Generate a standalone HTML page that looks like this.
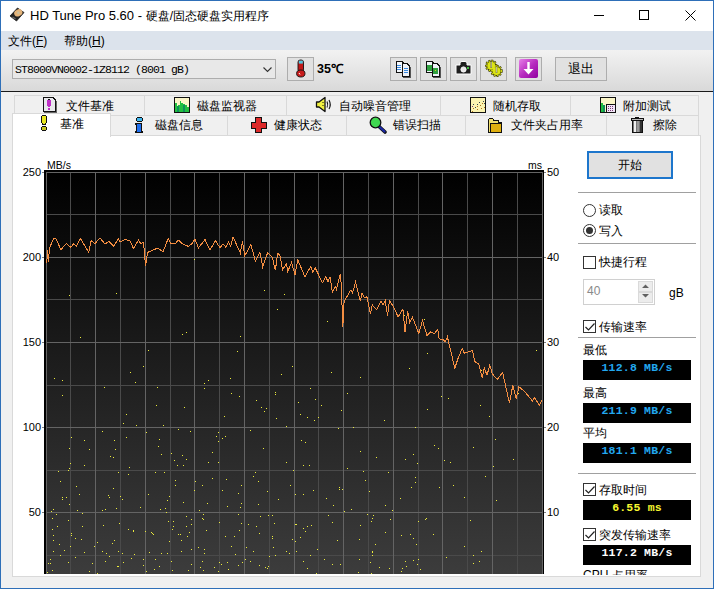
<!DOCTYPE html>
<html><head><meta charset="utf-8">
<style>
*{margin:0;padding:0;box-sizing:border-box}
html,body{width:714px;height:589px;overflow:hidden;background:#f0f0f0}
body{position:relative;font-family:"Liberation Sans",sans-serif;font-size:12px;color:#000}
.a{position:absolute}
.t{position:absolute;white-space:nowrap;line-height:1}
.win{left:0;top:0;width:714px;height:589px;border:1px solid #2e6fb8}
.title{left:1px;top:1px;width:712px;height:30px;background:#fff}
.menu{left:1px;top:31px;width:712px;height:19px;background:#dce3ec}
.tool{left:1px;top:50px;width:712px;height:41px;background:linear-gradient(#f2f2f2,#d9d9d9)}
.dark{left:1px;top:91px;width:712px;height:1px;background:#1a1a1a}
.tab{position:absolute;background:#f0f0f0;border:1px solid #d9d9d9;border-bottom:none}
.tbtn{position:absolute;top:57px;width:27px;height:24px;background:#e1e1e1;border:1px solid #adadad}
.panel{left:12px;top:135px;width:689px;height:442px;background:#fff;border:1px solid #d9d9d9}
.sep{position:absolute;left:578px;width:118px;height:1px;background:#a0a0a0}
.box{position:absolute;left:583px;width:108px;height:20px;background:#000;font-family:"Liberation Mono",monospace;font-weight:bold;font-size:11.5px;letter-spacing:0.2px;text-align:center;line-height:16px}
.cb{position:absolute;left:583px;width:13px;height:13px;border:1px solid #333;background:#fff}
</style></head><body>
<div class="a win"></div>
<div class="a title"></div>
<div class="a menu"></div>
<div class="a tool"></div>
<div class="a dark"></div>

<!-- title -->
<svg class="a" style="left:6px;top:4px" width="24" height="22" viewBox="0 0 24 22">
 <path d="M4 12 L11.5 4 L18 8.5 L10.5 17 Z" fill="#222" stroke="#1a1a1a" stroke-width="0.8" stroke-linejoin="round"/>
 <ellipse cx="12.3" cy="8.8" rx="4.3" ry="3.3" transform="rotate(-30 12.3 8.8)" fill="#e4b47a"/>
 <circle cx="12.3" cy="8.8" r="1.2" fill="#c8c0a0"/>
 <path d="M6.5 13 L9.5 15" stroke="#666" stroke-width="1.5"/>
</svg>
<div class="t" style="left:30px;top:9px;font-size:13px;color:#000">HD Tune Pro 5.60 - <span style="font-size:12px">硬盘/固态硬盘实用程序</span></div>
<div class="a" style="left:594px;top:15px;width:10px;height:1px;background:#000"></div>
<div class="a" style="left:639px;top:10px;width:10px;height:10px;border:1px solid #000"></div>
<svg class="a" style="left:685px;top:10px" width="11" height="11"><path d="M0.5 0.5 L10.5 10.5 M10.5 0.5 L0.5 10.5" stroke="#000" stroke-width="1"/></svg>

<!-- menu -->
<div class="t" style="left:8px;top:35px;font-size:12px">文件(<u>F</u>)</div>
<div class="t" style="left:64px;top:35px;font-size:12px">帮助(<u>H</u>)</div>

<!-- toolbar -->
<div class="a" style="left:12px;top:59px;width:264px;height:20px;background:#e8e8e8;border:1px solid #adadad"></div>
<div class="t" style="left:15px;top:64px;font-family:'Liberation Mono',monospace;font-size:11.5px;letter-spacing:-0.9px">ST8000VN0002-1Z8112 (8001 gB)</div>
<svg class="a" style="left:263px;top:67px" width="9" height="6"><path d="M0.5 0.5 L4.5 4.5 L8.5 0.5" stroke="#333" stroke-width="1.1" fill="none"/></svg>

<div class="tbtn" style="left:287px"></div>
<svg class="a" style="left:295px;top:59px" width="11" height="19" viewBox="0 0 11 19">
 <rect x="3" y="1" width="5.5" height="12" rx="2.2" fill="#c01818" stroke="#111" stroke-width="0.9"/>
 <rect x="3.8" y="1.6" width="4" height="3" fill="#50c8e0"/>
 <ellipse cx="5.8" cy="14.5" rx="4.2" ry="3.5" fill="#c81c1c" stroke="#111" stroke-width="0.9"/>
 <path d="M4 14 L5 15.5" stroke="#fff" stroke-width="1"/>
</svg>
<div class="t" style="left:317px;top:63px;font-weight:bold;font-size:12.5px">35℃</div>

<div class="tbtn" style="left:390px"></div>
<div class="tbtn" style="left:420px"></div>
<div class="tbtn" style="left:450px"></div>
<div class="tbtn" style="left:480px"></div>
<div class="tbtn" style="left:515px"></div>
<div class="a" style="left:555px;top:57px;width:52px;height:24px;background:#e1e1e1;border:1px solid #adadad"></div>
<div class="t" style="left:568px;top:62px;font-size:13px">退出</div>

<!-- tool icons -->
<svg class="a" style="left:394px;top:59px" width="20" height="20" viewBox="0 0 20 20" shape-rendering="crispEdges">
 <path d="M2 2 H8 L10 4 V14 H2 Z" fill="#111"/>
 <path d="M3 3 H7.5 L9 4.5 V13 H3 Z" fill="#f4f8fc"/>
 <path d="M3 6h4v1h-4zM3 8h4v1h-4zM3 10h4v1h-4z" fill="#3a8ae0"/>
 <path d="M8 4 H13 L16 7 V18 H8 Z" fill="#111"/>
 <path d="M9 5 H12.5 L15 7.5 V17 H9 Z" fill="#eef2f8"/>
 <path d="M10 9h4v1h-4zM10 11h4v1h-4zM10 13h4v1h-4z" fill="#3a8ae0"/>
 <path d="M16 8 H17 V19 H9 V18 H16 Z" fill="#555"/>
</svg>
<svg class="a" style="left:424px;top:59px" width="20" height="20" viewBox="0 0 20 20" shape-rendering="crispEdges">
 <path d="M2 2 H8 L10 4 V14 H2 Z" fill="#111"/>
 <path d="M3 3 H7.5 L9 4.5 V13 H3 Z" fill="#f4f8fc"/>
 <rect x="3" y="6" width="5" height="6" fill="#30a040"/>
 <path d="M8 4 H13 L16 7 V18 H8 Z" fill="#111"/>
 <path d="M9 5 H12.5 L15 7.5 V17 H9 Z" fill="#eef2f8"/>
 <rect x="9" y="9" width="5" height="6" fill="#30a040"/>
 <rect x="11" y="11" width="1" height="1" fill="#dd0"/>
 <path d="M16 8 H17 V19 H9 V18 H16 Z" fill="#555"/>
</svg>
<svg class="a" style="left:454px;top:60px" width="20" height="17" viewBox="0 0 20 17">
 <path d="M2 5 H6 V3 Q6 1.5 8 1.5 H11 Q13 1.5 13 3 V5 H17 V14 H2 Z" fill="#1e1e1e" stroke="#fff" stroke-width="1"/>
 <circle cx="9.5" cy="9.5" r="2.6" fill="#e8e8e8" stroke="#fafafa" stroke-width="1"/>
 <rect x="13" y="7" width="2" height="2" fill="#40c040"/>
</svg>
<svg class="a" style="left:484px;top:59px" width="20" height="19" viewBox="0 0 20 19">
 <circle cx="7.2" cy="6.8" r="5" fill="#3a3a00"/>
 <circle cx="12.5" cy="11.9" r="5" fill="#3a3a00"/>
 <circle cx="7.2" cy="6.8" r="5" fill="none" stroke="#3a3a00" stroke-width="2.4" stroke-dasharray="1.8 1.1"/>
 <circle cx="12.5" cy="11.9" r="5" fill="none" stroke="#3a3a00" stroke-width="2.4" stroke-dasharray="1.8 1.1"/>
 <circle cx="7.2" cy="6.8" r="4.9" fill="none" stroke="#d8e010" stroke-width="1.2" stroke-dasharray="1.2 1.7"/>
 <circle cx="7.2" cy="6.8" r="4" fill="#dce414"/>
 <circle cx="12.5" cy="11.9" r="4.9" fill="none" stroke="#d8e010" stroke-width="1.2" stroke-dasharray="1.2 1.7"/>
 <circle cx="12.5" cy="11.9" r="4" fill="#dce414"/>
 <path d="M7.2 2.5 V9 M12.5 7.5 V14" stroke="#707048" stroke-width="1.6"/>
 <path d="M7.2 3 V8.5 M12.5 8 V13.5" stroke="#f0f0c8" stroke-width="0.6"/>
</svg>
<svg class="a" style="left:519px;top:59px" width="19" height="19" viewBox="0 0 19 19">
 <defs><linearGradient id="pg" x1="0" y1="0" x2="1" y2="1"><stop offset="0" stop-color="#e880e8"/><stop offset="0.5" stop-color="#b82cc0"/><stop offset="1" stop-color="#9000a0"/></linearGradient></defs>
 <rect x="0" y="0" width="19" height="19" rx="2" fill="url(#pg)"/>
 <path d="M8.3 3 H10.7 V10 H14.5 L9.5 15.5 L4.5 10 H8.3 Z" fill="#fff"/>
</svg>

<!-- tabs top row -->
<div class="tab" style="left:14px;top:95px;width:131px;height:21px"></div>
<div class="tab" style="left:144px;top:95px;width:143px;height:21px"></div>
<div class="tab" style="left:286px;top:95px;width:155px;height:21px"></div>
<div class="tab" style="left:440px;top:95px;width:131px;height:21px"></div>
<div class="tab" style="left:570px;top:95px;width:129px;height:21px"></div>
<!-- tabs bottom row -->
<div class="tab" style="left:110px;top:115px;width:118px;height:21px"></div>
<div class="tab" style="left:227px;top:115px;width:120px;height:21px"></div>
<div class="tab" style="left:346px;top:115px;width:120px;height:21px"></div>
<div class="tab" style="left:465px;top:115px;width:142px;height:21px"></div>
<div class="tab" style="left:606px;top:115px;width:93px;height:21px"></div>

<div class="a panel"></div>
<div class="tab" style="left:12px;top:113px;width:99px;height:24px;background:#fff;border-color:#d9d9d9"></div>

<!-- tab labels -->
<div class="t" style="left:66px;top:100px">文件基准</div>
<div class="t" style="left:197px;top:100px">磁盘监视器</div>
<div class="t" style="left:339px;top:100px">自动噪音管理</div>
<div class="t" style="left:493px;top:100px">随机存取</div>
<div class="t" style="left:623px;top:100px">附加测试</div>
<div class="t" style="left:60px;top:118px">基准</div>
<div class="t" style="left:155px;top:119px">磁盘信息</div>
<div class="t" style="left:274px;top:119px">健康状态</div>
<div class="t" style="left:393px;top:119px">错误扫描</div>
<div class="t" style="left:511px;top:119px">文件夹占用率</div>
<div class="t" style="left:653px;top:119px">擦除</div>

<!-- tab icons -->
<svg class="a" style="left:42px;top:96px" width="17" height="18" viewBox="0 0 17 18" shape-rendering="crispEdges">
 <path d="M1 1 H11 L14 4 V16 H1 Z" fill="#111"/>
 <path d="M2 2 H10.5 L13 4.5 V15 H2 Z" fill="#e8e8ec"/>
 <path d="M5 4 H9 V10 H8 V11 H6 V10 H5 Z" fill="#c030c8"/>
 <path d="M6 3 H8 V4 H6 Z" fill="#111"/>
 <path d="M6 12 H8 V14 H6 Z" fill="#c030c8"/>
 <path d="M14 5 H15 V17 H2 V16 H14 Z" fill="#666"/>
</svg>
<svg class="a" style="left:173px;top:96px" width="18" height="18" viewBox="0 0 18 18" shape-rendering="crispEdges">
 <rect x="1" y="1" width="16" height="16" fill="#111"/>
 <rect x="2" y="2" width="14" height="14" fill="#fbf6c8"/>
 <path d="M2 7 H4 V10 H5 V9 H7 V5 H8 V7 H10 V8 H12 V9 H14 V11 H16 V16 H2 Z" fill="#22c040"/>
 <path d="M4 10 H6 V16 H4 Z M10 9 H12 V16 H10 Z" fill="#10905a"/>
</svg>
<svg class="a" style="left:315px;top:96px" width="18" height="17" viewBox="0 0 18 17">
 <path d="M1.5 6 H4 L10 1.5 V15.5 L4 11 H1.5 Z" fill="#f0f040" stroke="#111" stroke-width="1.3" stroke-linejoin="round"/>
 <path d="M8 6v1M8 9v1" stroke="#111"/>
 <path d="M12 5.5 Q13.5 8.5 12 11.5 M14 4 Q16.5 8.5 14 13" stroke="#111" stroke-width="1.1" fill="none"/>
</svg>
<svg class="a" style="left:469px;top:96px" width="18" height="18" viewBox="0 0 18 18" shape-rendering="crispEdges">
 <rect x="1" y="1" width="16" height="16" fill="#111"/>
 <rect x="2" y="2" width="14" height="14" fill="#fbf4b0"/>
 <path d="M8 10h1v1h-1zM11 9h1v1h-1zM13 7h1v1h-1zM15 11h1v1h-1zM12 12h1v1h-1zM8 13h1v1h-1zM4 12h1v1h-1zM3 15h1v1h-1z" fill="#b07020"/>
 <path d="M4 8h1v1h-1zM10 6h1v1h-1zM14 5h1v1h-1zM6 11h1v1h-1zM8 8h1v1h-1zM15 7h1v1h-1z" fill="#304050"/>
 <path d="M3 10h1v1h-1z" fill="#803080"/>
</svg>
<svg class="a" style="left:599px;top:96px" width="18" height="18" viewBox="0 0 18 18" shape-rendering="crispEdges">
 <rect x="1" y="1" width="16" height="16" fill="#111"/>
 <rect x="2" y="2" width="14" height="14" fill="#fbf6c8"/>
 <path d="M2 7 H4 V9 H6 V16 H2 Z" fill="#22c040"/>
 <rect x="4" y="9" width="2" height="7" fill="#10905a"/>
 <rect x="7" y="8" width="10" height="9" fill="#111"/>
 <rect x="8" y="9" width="8" height="7" fill="#f2e6f8"/>
 <path d="M9 10h1v1h-1zM11 10h1v1h-1zM13 10h1v1h-1zM9 12h1v1h-1zM11 12h1v1h-1zM13 12h1v1h-1zM9 14h1v1h-1zM11 14h1v1h-1zM13 14h1v1h-1z" fill="#7a3a70"/>
</svg>
<svg class="a" style="left:40px;top:115px" width="10" height="17" viewBox="0 0 10 17" shape-rendering="crispEdges">
 <path d="M2 0 H6 V1 H7 V8 H6 V10 H2 V8 H1 V1 H2 Z" fill="#111"/>
 <path d="M2 1 H6 V8 H5 V9 H3 V8 H2 Z" fill="#e8e820"/>
 <path d="M2 11 H6 V12 H7 V15 H6 V16 H2 V15 H1 V12 H2 Z" fill="#111"/>
 <path d="M2 12 H6 V15 H2 Z" fill="#c8c820"/>
</svg>
<svg class="a" style="left:134px;top:116px" width="11" height="18" viewBox="0 0 11 18" shape-rendering="crispEdges">
 <path d="M3 1 H8 V2 H9 V5 H8 V6 H3 V5 H2 V2 H3 Z" fill="#111"/>
 <path d="M3 2 H8 V5 H3 Z" fill="#40b8f0"/>
 <path d="M1 7 H8 V15 H9 V17 H1 V15 H2 V9 H1 Z" fill="#111"/>
 <path d="M3 8 H7 V16 H3 Z" fill="#2070f0"/>
</svg>
<svg class="a" style="left:250px;top:116px" width="18" height="18" viewBox="0 0 18 18" shape-rendering="crispEdges">
 <path d="M5 1 H12 V6 H17 V13 H12 V17 H5 V13 H1 V6 H5 Z" fill="#111"/>
 <path d="M6 2 H11 V7 H16 V12 H11 V16 H6 V12 H2 V7 H6 Z" fill="#dd2a2a"/>
</svg>
<svg class="a" style="left:369px;top:116px" width="18" height="18" viewBox="0 0 18 18">
 <path d="M9.5 10 L16 16" stroke="#111" stroke-width="3.6" stroke-linecap="round"/>
 <path d="M9.5 10 L15.5 15.5" stroke="#1a28a8" stroke-width="2.2" stroke-linecap="round"/>
 <circle cx="6.5" cy="6.5" r="5.3" fill="#40d850" stroke="#111" stroke-width="1.3"/>
</svg>
<svg class="a" style="left:487px;top:116px" width="17" height="18" viewBox="0 0 17 18" shape-rendering="crispEdges">
 <path d="M1 3 H2 V2 H6 V3 H7 V4 H12 V6 H15 V17 H1 Z" fill="#111"/>
 <path d="M2 3 H6 V5 H11 V7 H3 V16 H2 Z" fill="#f0e070"/>
 <rect x="4" y="8" width="10" height="8" fill="#e0b010"/>
</svg>
<svg class="a" style="left:629px;top:116px" width="16" height="18" viewBox="0 0 16 18" shape-rendering="crispEdges">
 <path d="M6 1 H10 V2 H15 V5 H14 V17 H3 V5 H2 V2 H6 Z" fill="#111"/>
 <rect x="3" y="3" width="11" height="1" fill="#bbb"/>
 <rect x="4" y="5" width="9" height="11" fill="#777"/>
 <rect x="5" y="5" width="2" height="11" fill="#eee"/>
 <rect x="8" y="5" width="2" height="11" fill="#999"/>
 <rect x="11" y="5" width="2" height="11" fill="#333"/>
</svg>

<!-- chart labels -->
<div class="t" style="left:47px;top:160px;font-size:10.5px">MB/s</div>
<div class="t" style="left:528px;top:160px;font-size:10.5px">ms</div>
<div class="t" style="left:0;width:41px;text-align:right;top:167px;font-size:11px">250</div>
<div class="t" style="left:547px;top:167px;font-size:11px">50</div>
<div class="a" style="left:42px;top:172px;width:2px;height:1px;background:#808080"></div>
<div class="a" style="left:544px;top:172px;width:2px;height:1px;background:#808080"></div>
<div class="t" style="left:0;width:41px;text-align:right;top:252px;font-size:11px">200</div>
<div class="t" style="left:547px;top:252px;font-size:11px">40</div>
<div class="a" style="left:42px;top:257px;width:2px;height:1px;background:#808080"></div>
<div class="a" style="left:544px;top:257px;width:2px;height:1px;background:#808080"></div>
<div class="t" style="left:0;width:41px;text-align:right;top:337px;font-size:11px">150</div>
<div class="t" style="left:547px;top:337px;font-size:11px">30</div>
<div class="a" style="left:42px;top:342px;width:2px;height:1px;background:#808080"></div>
<div class="a" style="left:544px;top:342px;width:2px;height:1px;background:#808080"></div>
<div class="t" style="left:0;width:41px;text-align:right;top:422px;font-size:11px">100</div>
<div class="t" style="left:547px;top:422px;font-size:11px">20</div>
<div class="a" style="left:42px;top:427px;width:2px;height:1px;background:#808080"></div>
<div class="a" style="left:544px;top:427px;width:2px;height:1px;background:#808080"></div>
<div class="t" style="left:0;width:41px;text-align:right;top:507px;font-size:11px">50</div>
<div class="t" style="left:547px;top:507px;font-size:11px">10</div>
<div class="a" style="left:42px;top:512px;width:2px;height:1px;background:#808080"></div>
<div class="a" style="left:544px;top:512px;width:2px;height:1px;background:#808080"></div>
<svg width="500" height="404" viewBox="0 0 500 404" style="position:absolute;left:44px;top:170px;display:block">
<defs><linearGradient id="bg" x1="0" y1="0" x2="0" y2="1"><stop offset="0" stop-color="#000"/><stop offset="1" stop-color="#3c3c3c"/></linearGradient></defs>
<rect x="0" y="0" width="500" height="404" fill="url(#bg)"/>
<rect x="0" y="0" width="2" height="404" fill="#000"/>
<rect x="0" y="0" width="500" height="2" fill="#000"/>
<rect x="499" y="0" width="1" height="404" fill="#000"/>
<g stroke="#4a4a4a" stroke-width="1" shape-rendering="crispEdges"><line x1="26.5" y1="2" x2="26.5" y2="404"/><line x1="76.5" y1="2" x2="76.5" y2="404"/><line x1="126.5" y1="2" x2="126.5" y2="404"/><line x1="175.5" y1="2" x2="175.5" y2="404"/><line x1="225.5" y1="2" x2="225.5" y2="404"/><line x1="274.5" y1="2" x2="274.5" y2="404"/><line x1="324.5" y1="2" x2="324.5" y2="404"/><line x1="374.5" y1="2" x2="374.5" y2="404"/><line x1="423.5" y1="2" x2="423.5" y2="404"/><line x1="473.5" y1="2" x2="473.5" y2="404"/><line x1="2" y1="44.5" x2="498" y2="44.5"/><line x1="2" y1="129.5" x2="498" y2="129.5"/><line x1="2" y1="215.5" x2="498" y2="215.5"/><line x1="2" y1="300.5" x2="498" y2="300.5"/><line x1="2" y1="385.5" x2="498" y2="385.5"/></g>
<g stroke="#646464" stroke-width="1" shape-rendering="crispEdges"><line x1="2.5" y1="2" x2="2.5" y2="404"/><line x1="51.5" y1="2" x2="51.5" y2="404"/><line x1="101.5" y1="2" x2="101.5" y2="404"/><line x1="150.5" y1="2" x2="150.5" y2="404"/><line x1="200.5" y1="2" x2="200.5" y2="404"/><line x1="250.5" y1="2" x2="250.5" y2="404"/><line x1="299.5" y1="2" x2="299.5" y2="404"/><line x1="349.5" y1="2" x2="349.5" y2="404"/><line x1="398.5" y1="2" x2="398.5" y2="404"/><line x1="448.5" y1="2" x2="448.5" y2="404"/><line x1="498.5" y1="2" x2="498.5" y2="404"/><line x1="2" y1="2.5" x2="498" y2="2.5"/><line x1="2" y1="87.5" x2="498" y2="87.5"/><line x1="2" y1="172.5" x2="498" y2="172.5"/><line x1="2" y1="257.5" x2="498" y2="257.5"/><line x1="2" y1="342.5" x2="498" y2="342.5"/></g>
<g fill="#ecec3c"><rect x="217" y="237" width="1" height="1"/><rect x="155" y="340" width="1" height="1"/><rect x="451" y="269" width="1" height="1"/><rect x="150" y="89" width="1" height="1"/><rect x="231" y="385" width="1" height="1"/><rect x="184" y="399" width="1" height="1"/><rect x="130" y="290" width="1" height="1"/><rect x="369" y="368" width="1" height="1"/><rect x="197" y="333" width="1" height="1"/><rect x="107" y="362" width="1" height="1"/><rect x="263" y="398" width="1" height="1"/><rect x="147" y="349" width="1" height="1"/><rect x="429" y="385" width="1" height="1"/><rect x="170" y="397" width="1" height="1"/><rect x="195" y="226" width="1" height="1"/><rect x="115" y="269" width="1" height="1"/><rect x="420" y="376" width="1" height="1"/><rect x="53" y="403" width="1" height="1"/><rect x="212" y="356" width="1" height="1"/><rect x="332" y="287" width="1" height="1"/><rect x="163" y="333" width="1" height="1"/><rect x="160" y="383" width="1" height="1"/><rect x="327" y="351" width="1" height="1"/><rect x="315" y="389" width="1" height="1"/><rect x="221" y="397" width="1" height="1"/><rect x="329" y="345" width="1" height="1"/><rect x="180" y="246" width="1" height="1"/><rect x="142" y="289" width="1" height="1"/><rect x="257" y="270" width="1" height="1"/><rect x="211" y="302" width="1" height="1"/><rect x="206" y="391" width="1" height="1"/><rect x="197" y="315" width="1" height="1"/><rect x="174" y="262" width="1" height="1"/><rect x="70" y="370" width="1" height="1"/><rect x="91" y="212" width="1" height="1"/><rect x="58" y="261" width="1" height="1"/><rect x="196" y="337" width="1" height="1"/><rect x="371" y="257" width="1" height="1"/><rect x="202" y="377" width="1" height="1"/><rect x="142" y="162" width="1" height="1"/><rect x="58" y="381" width="1" height="1"/><rect x="371" y="307" width="1" height="1"/><rect x="261" y="361" width="1" height="1"/><rect x="197" y="353" width="1" height="1"/><rect x="66" y="286" width="1" height="1"/><rect x="389" y="364" width="1" height="1"/><rect x="78" y="329" width="1" height="1"/><rect x="6" y="389" width="1" height="1"/><rect x="265" y="295" width="1" height="1"/><rect x="201" y="389" width="1" height="1"/><rect x="45" y="401" width="1" height="1"/><rect x="20" y="380" width="1" height="1"/><rect x="90" y="384" width="1" height="1"/><rect x="204" y="354" width="1" height="1"/><rect x="65" y="386" width="1" height="1"/><rect x="168" y="308" width="1" height="1"/><rect x="134" y="364" width="1" height="1"/><rect x="400" y="290" width="1" height="1"/><rect x="111" y="389" width="1" height="1"/><rect x="224" y="396" width="1" height="1"/><rect x="60" y="217" width="1" height="1"/><rect x="160" y="213" width="1" height="1"/><rect x="18" y="210" width="1" height="1"/><rect x="104" y="324" width="1" height="1"/><rect x="429" y="393" width="1" height="1"/><rect x="186" y="208" width="1" height="1"/><rect x="373" y="394" width="1" height="1"/><rect x="314" y="402" width="1" height="1"/><rect x="287" y="202" width="1" height="1"/><rect x="183" y="336" width="1" height="1"/><rect x="78" y="383" width="1" height="1"/><rect x="383" y="239" width="1" height="1"/><rect x="426" y="350" width="1" height="1"/><rect x="37" y="369" width="1" height="1"/><rect x="373" y="293" width="1" height="1"/><rect x="242" y="292" width="1" height="1"/><rect x="298" y="319" width="1" height="1"/><rect x="297" y="240" width="1" height="1"/><rect x="16" y="385" width="1" height="1"/><rect x="139" y="295" width="1" height="1"/><rect x="326" y="392" width="1" height="1"/><rect x="307" y="339" width="1" height="1"/><rect x="59" y="355" width="1" height="1"/><rect x="124" y="351" width="1" height="1"/><rect x="212" y="230" width="1" height="1"/><rect x="125" y="371" width="1" height="1"/><rect x="259" y="358" width="1" height="1"/><rect x="449" y="296" width="1" height="1"/><rect x="289" y="335" width="1" height="1"/><rect x="82" y="244" width="1" height="1"/><rect x="474" y="223" width="1" height="1"/><rect x="73" y="396" width="1" height="1"/><rect x="240" y="124" width="1" height="1"/><rect x="251" y="354" width="1" height="1"/><rect x="143" y="366" width="1" height="1"/><rect x="123" y="330" width="1" height="1"/><rect x="394" y="278" width="1" height="1"/><rect x="321" y="310" width="1" height="1"/><rect x="134" y="259" width="1" height="1"/><rect x="38" y="356" width="1" height="1"/><rect x="254" y="232" width="1" height="1"/><rect x="26" y="293" width="1" height="1"/><rect x="223" y="321" width="1" height="1"/><rect x="9" y="370" width="1" height="1"/><rect x="341" y="362" width="1" height="1"/><rect x="8" y="348" width="1" height="1"/><rect x="147" y="354" width="1" height="1"/><rect x="53" y="372" width="1" height="1"/><rect x="24" y="300" width="1" height="1"/><rect x="142" y="356" width="1" height="1"/><rect x="150" y="320" width="1" height="1"/><rect x="198" y="392" width="1" height="1"/><rect x="16" y="311" width="1" height="1"/><rect x="10" y="208" width="1" height="1"/><rect x="361" y="391" width="1" height="1"/><rect x="27" y="365" width="1" height="1"/><rect x="187" y="376" width="1" height="1"/><rect x="357" y="401" width="1" height="1"/><rect x="84" y="359" width="1" height="1"/><rect x="397" y="226" width="1" height="1"/><rect x="266" y="385" width="1" height="1"/><rect x="160" y="218" width="1" height="1"/><rect x="113" y="217" width="1" height="1"/><rect x="18" y="327" width="1" height="1"/><rect x="32" y="316" width="1" height="1"/><rect x="168" y="282" width="1" height="1"/><rect x="248" y="369" width="1" height="1"/><rect x="356" y="328" width="1" height="1"/><rect x="140" y="237" width="1" height="1"/><rect x="158" y="391" width="1" height="1"/><rect x="345" y="398" width="1" height="1"/><rect x="69" y="318" width="1" height="1"/><rect x="164" y="210" width="1" height="1"/><rect x="3" y="402" width="1" height="1"/><rect x="25" y="278" width="1" height="1"/><rect x="129" y="356" width="1" height="1"/><rect x="360" y="145" width="1" height="1"/><rect x="137" y="370" width="1" height="1"/><rect x="175" y="352" width="1" height="1"/><rect x="79" y="253" width="1" height="1"/><rect x="214" y="311" width="1" height="1"/><rect x="209" y="381" width="1" height="1"/><rect x="309" y="257" width="1" height="1"/><rect x="316" y="207" width="1" height="1"/><rect x="216" y="346" width="1" height="1"/><rect x="283" y="151" width="1" height="1"/><rect x="303" y="223" width="1" height="1"/><rect x="395" y="317" width="1" height="1"/><rect x="249" y="300" width="1" height="1"/><rect x="237" y="204" width="1" height="1"/><rect x="366" y="364" width="1" height="1"/><rect x="164" y="292" width="1" height="1"/><rect x="24" y="392" width="1" height="1"/><rect x="374" y="351" width="1" height="1"/><rect x="25" y="298" width="1" height="1"/><rect x="82" y="267" width="1" height="1"/><rect x="372" y="374" width="1" height="1"/><rect x="7" y="341" width="1" height="1"/><rect x="469" y="289" width="1" height="1"/><rect x="374" y="389" width="1" height="1"/><rect x="436" y="235" width="1" height="1"/><rect x="138" y="285" width="1" height="1"/><rect x="174" y="401" width="1" height="1"/><rect x="102" y="401" width="1" height="1"/><rect x="85" y="297" width="1" height="1"/><rect x="215" y="395" width="1" height="1"/><rect x="138" y="164" width="1" height="1"/><rect x="9" y="339" width="1" height="1"/><rect x="147" y="379" width="1" height="1"/><rect x="441" y="306" width="1" height="1"/><rect x="328" y="348" width="1" height="1"/><rect x="131" y="315" width="1" height="1"/><rect x="159" y="349" width="1" height="1"/><rect x="183" y="392" width="1" height="1"/><rect x="340" y="250" width="1" height="1"/><rect x="40" y="270" width="1" height="1"/><rect x="70" y="270" width="1" height="1"/><rect x="133" y="295" width="1" height="1"/><rect x="195" y="360" width="1" height="1"/><rect x="45" y="279" width="1" height="1"/><rect x="437" y="200" width="1" height="1"/><rect x="74" y="302" width="1" height="1"/><rect x="266" y="218" width="1" height="1"/><rect x="245" y="383" width="1" height="1"/><rect x="280" y="389" width="1" height="1"/><rect x="128" y="400" width="1" height="1"/><rect x="344" y="302" width="1" height="1"/><rect x="242" y="381" width="1" height="1"/><rect x="115" y="396" width="1" height="1"/><rect x="263" y="247" width="1" height="1"/><rect x="76" y="326" width="1" height="1"/><rect x="24" y="350" width="1" height="1"/><rect x="38" y="343" width="1" height="1"/><rect x="429" y="277" width="1" height="1"/><rect x="8" y="400" width="1" height="1"/><rect x="128" y="359" width="1" height="1"/><rect x="31" y="368" width="1" height="1"/><rect x="174" y="292" width="1" height="1"/><rect x="327" y="403" width="1" height="1"/><rect x="357" y="365" width="1" height="1"/><rect x="445" y="246" width="1" height="1"/><rect x="114" y="276" width="1" height="1"/><rect x="369" y="284" width="1" height="1"/><rect x="367" y="317" width="1" height="1"/><rect x="316" y="281" width="1" height="1"/><rect x="102" y="262" width="1" height="1"/><rect x="282" y="328" width="1" height="1"/><rect x="122" y="342" width="1" height="1"/><rect x="295" y="319" width="1" height="1"/><rect x="177" y="394" width="1" height="1"/><rect x="65" y="327" width="1" height="1"/><rect x="219" y="278" width="1" height="1"/><rect x="369" y="390" width="1" height="1"/><rect x="295" y="317" width="1" height="1"/><rect x="178" y="320" width="1" height="1"/><rect x="380" y="149" width="1" height="1"/><rect x="256" y="244" width="1" height="1"/><rect x="196" y="166" width="1" height="1"/><rect x="191" y="384" width="1" height="1"/><rect x="27" y="267" width="1" height="1"/><rect x="233" y="139" width="1" height="1"/><rect x="18" y="329" width="1" height="1"/><rect x="358" y="398" width="1" height="1"/><rect x="409" y="315" width="1" height="1"/><rect x="156" y="397" width="1" height="1"/><rect x="230" y="353" width="1" height="1"/><rect x="181" y="266" width="1" height="1"/><rect x="220" y="120" width="1" height="1"/><rect x="12" y="344" width="1" height="1"/><rect x="316" y="355" width="1" height="1"/><rect x="228" y="368" width="1" height="1"/><rect x="99" y="395" width="1" height="1"/><rect x="190" y="366" width="1" height="1"/><rect x="123" y="383" width="1" height="1"/><rect x="99" y="389" width="1" height="1"/><rect x="187" y="223" width="1" height="1"/><rect x="15" y="374" width="1" height="1"/><rect x="390" y="275" width="1" height="1"/><rect x="252" y="354" width="1" height="1"/><rect x="296" y="394" width="1" height="1"/><rect x="404" y="228" width="1" height="1"/><rect x="252" y="381" width="1" height="1"/><rect x="158" y="348" width="1" height="1"/><rect x="75" y="353" width="1" height="1"/><rect x="270" y="250" width="1" height="1"/><rect x="35" y="324" width="1" height="1"/><rect x="99" y="196" width="1" height="1"/><rect x="159" y="400" width="1" height="1"/><rect x="147" y="394" width="1" height="1"/><rect x="263" y="356" width="1" height="1"/><rect x="151" y="311" width="1" height="1"/><rect x="284" y="345" width="1" height="1"/><rect x="125" y="326" width="1" height="1"/><rect x="246" y="315" width="1" height="1"/><rect x="4" y="393" width="1" height="1"/><rect x="402" y="387" width="1" height="1"/><rect x="194" y="344" width="1" height="1"/><rect x="261" y="272" width="1" height="1"/><rect x="139" y="332" width="1" height="1"/><rect x="50" y="376" width="1" height="1"/><rect x="288" y="352" width="1" height="1"/><rect x="225" y="386" width="1" height="1"/><rect x="251" y="371" width="1" height="1"/><rect x="31" y="387" width="1" height="1"/><rect x="277" y="235" width="1" height="1"/><rect x="117" y="284" width="1" height="1"/><rect x="64" y="325" width="1" height="1"/><rect x="259" y="295" width="1" height="1"/><rect x="271" y="229" width="1" height="1"/><rect x="346" y="349" width="1" height="1"/><rect x="194" y="323" width="1" height="1"/><rect x="137" y="381" width="1" height="1"/><rect x="251" y="324" width="1" height="1"/><rect x="382" y="348" width="1" height="1"/><rect x="40" y="295" width="1" height="1"/><rect x="27" y="363" width="1" height="1"/><rect x="154" y="377" width="1" height="1"/><rect x="136" y="364" width="1" height="1"/><rect x="293" y="370" width="1" height="1"/><rect x="376" y="399" width="1" height="1"/><rect x="288" y="394" width="1" height="1"/><rect x="335" y="397" width="1" height="1"/><rect x="111" y="302" width="1" height="1"/><rect x="206" y="260" width="1" height="1"/><rect x="452" y="330" width="1" height="1"/><rect x="62" y="383" width="1" height="1"/><rect x="174" y="271" width="1" height="1"/><rect x="348" y="340" width="1" height="1"/><rect x="328" y="381" width="1" height="1"/><rect x="158" y="315" width="1" height="1"/><rect x="129" y="351" width="1" height="1"/><rect x="495" y="235" width="1" height="1"/><rect x="229" y="377" width="1" height="1"/><rect x="232" y="248" width="1" height="1"/><rect x="26" y="376" width="1" height="1"/><rect x="328" y="385" width="1" height="1"/><rect x="259" y="391" width="1" height="1"/><rect x="121" y="338" width="1" height="1"/><rect x="272" y="403" width="1" height="1"/><rect x="178" y="268" width="1" height="1"/><rect x="223" y="398" width="1" height="1"/><rect x="222" y="238" width="1" height="1"/><rect x="108" y="363" width="1" height="1"/><rect x="228" y="366" width="1" height="1"/><rect x="381" y="349" width="1" height="1"/><rect x="127" y="283" width="1" height="1"/><rect x="162" y="360" width="1" height="1"/><rect x="331" y="374" width="1" height="1"/><rect x="182" y="309" width="1" height="1"/><rect x="40" y="382" width="1" height="1"/><rect x="58" y="340" width="1" height="1"/><rect x="492" y="180" width="1" height="1"/><rect x="61" y="339" width="1" height="1"/><rect x="69" y="287" width="1" height="1"/><rect x="68" y="373" width="1" height="1"/><rect x="96" y="337" width="1" height="1"/><rect x="420" y="327" width="1" height="1"/><rect x="325" y="321" width="1" height="1"/><rect x="365" y="198" width="1" height="1"/><rect x="159" y="344" width="1" height="1"/><rect x="89" y="361" width="1" height="1"/><rect x="9" y="365" width="1" height="1"/><rect x="172" y="266" width="1" height="1"/><rect x="215" y="363" width="1" height="1"/><rect x="181" y="366" width="1" height="1"/><rect x="112" y="235" width="1" height="1"/><rect x="92" y="255" width="1" height="1"/><rect x="300" y="341" width="1" height="1"/><rect x="14" y="301" width="1" height="1"/><rect x="274" y="247" width="1" height="1"/><rect x="33" y="340" width="1" height="1"/><rect x="127" y="391" width="1" height="1"/><rect x="72" y="123" width="1" height="1"/><rect x="25" y="334" width="1" height="1"/><rect x="104" y="180" width="1" height="1"/><rect x="315" y="369" width="1" height="1"/><rect x="267" y="355" width="1" height="1"/><rect x="89" y="360" width="1" height="1"/><rect x="362" y="396" width="1" height="1"/><rect x="61" y="391" width="1" height="1"/><rect x="48" y="393" width="1" height="1"/><rect x="175" y="392" width="1" height="1"/><rect x="116" y="339" width="1" height="1"/><rect x="84" y="304" width="1" height="1"/><rect x="323" y="344" width="1" height="1"/><rect x="13" y="356" width="1" height="1"/><rect x="228" y="345" width="1" height="1"/><rect x="146" y="261" width="1" height="1"/><rect x="269" y="320" width="1" height="1"/><rect x="194" y="395" width="1" height="1"/><rect x="437" y="381" width="1" height="1"/><rect x="144" y="400" width="1" height="1"/><rect x="319" y="301" width="1" height="1"/><rect x="145" y="362" width="1" height="1"/><rect x="72" y="338" width="1" height="1"/><rect x="18" y="225" width="1" height="1"/><rect x="8" y="359" width="1" height="1"/><rect x="74" y="381" width="1" height="1"/><rect x="435" y="391" width="1" height="1"/><rect x="101" y="361" width="1" height="1"/><rect x="120" y="302" width="1" height="1"/><rect x="371" y="312" width="1" height="1"/><rect x="406" y="292" width="1" height="1"/><rect x="79" y="392" width="1" height="1"/><rect x="209" y="306" width="1" height="1"/><rect x="110" y="399" width="1" height="1"/><rect x="9" y="381" width="1" height="1"/><rect x="256" y="367" width="1" height="1"/><rect x="248" y="196" width="1" height="1"/><rect x="160" y="379" width="1" height="1"/><rect x="383" y="183" width="1" height="1"/><rect x="294" y="258" width="1" height="1"/><rect x="22" y="327" width="1" height="1"/><rect x="36" y="167" width="1" height="1"/><rect x="224" y="345" width="1" height="1"/><rect x="273" y="379" width="1" height="1"/><rect x="71" y="279" width="1" height="1"/><rect x="6" y="393" width="1" height="1"/><rect x="341" y="335" width="1" height="1"/><rect x="117" y="383" width="1" height="1"/><rect x="74" y="396" width="1" height="1"/><rect x="328" y="382" width="1" height="1"/><rect x="242" y="256" width="1" height="1"/><rect x="25" y="125" width="1" height="1"/><rect x="361" y="289" width="1" height="1"/><rect x="231" y="224" width="1" height="1"/><rect x="87" y="388" width="1" height="1"/><rect x="131" y="310" width="1" height="1"/><rect x="119" y="255" width="1" height="1"/><rect x="259" y="324" width="1" height="1"/><rect x="231" y="222" width="1" height="1"/><rect x="234" y="329" width="1" height="1"/><rect x="105" y="382" width="1" height="1"/><rect x="303" y="298" width="1" height="1"/><rect x="214" y="334" width="1" height="1"/><rect x="193" y="181" width="1" height="1"/><rect x="86" y="202" width="1" height="1"/><rect x="142" y="346" width="1" height="1"/><rect x="109" y="364" width="1" height="1"/><rect x="220" y="241" width="1" height="1"/></g>
<polyline points="2.8,93.0 3.5,80.0 4.2,92.0 5.6,77.5 10.0,68.0 12.3,69.0 16.8,79.7 22.4,73.5 26.9,77.5 29.7,73.5 32.5,76.3 36.4,68.5 44.8,82.5 47.0,70.7 51.0,73.5 56.0,68.0 61.0,74.0 65.0,71.3 69.5,76.3 74.5,68.5 76.0,71.8 81.0,69.6 86.0,70.7 89.4,78.6 94.5,70.0 96.7,73.5 99.5,72.4 101.5,96.0 103.5,82.5 105.7,81.4 114.0,78.0 119.0,82.0 124.2,68.5 127.0,73.5 131.0,74.0 134.3,70.0 138.7,74.0 144.3,76.3 147.7,74.0 151.0,69.0 154.4,78.0 161.0,69.6 166.0,79.7 171.6,70.7 176.0,78.0 178.9,74.0 181.7,77.0 184.5,72.4 186.7,76.3 189.0,66.8 196.3,83.0 198.5,71.3 200.7,85.9 206.9,74.6 211.4,91.0 215.9,82.5 218.7,97.0 223.7,82.5 228.2,87.0 231.4,100.3 233.6,83.5 235.8,84.6 238.6,99.8 242.6,93.6 243.7,101.5 247.6,92.5 251.0,104.8 253.8,89.7 261.0,107.0 266.7,96.4 268.9,102.6 271.1,97.5 278.4,112.7 281.8,107.0 284.0,111.5 286.0,106.9 288.4,122.3 291.3,116.4 292.5,119.3 295.5,106.9 296.5,103.9 297.3,116.4 298.8,156.8 300.0,133.0 301.4,129.4 306.8,120.0 308.6,122.9 311.5,112.2 316.3,131.2 318.0,122.9 320.4,127.7 322.8,126.5 326.4,143.7 328.2,134.8 330.5,137.8 332.9,139.5 337.0,131.2 338.9,134.8 341.2,130.6 343.6,145.5 345.4,130.6 347.4,133.5 350.1,138.2 354.2,147.0 358.9,138.9 361.0,162.0 363.7,141.0 365.7,152.5 368.4,147.2 374.8,163.5 378.5,150.6 383.0,165.5 386.4,162.0 390.4,163.5 393.8,159.4 395.2,168.9 399.3,169.6 401.3,171.6 403.4,166.9 410.8,198.1 414.2,187.9 418.3,178.4 420.3,183.2 428.5,180.4 430.8,191.7 434.8,193.8 438.2,208.0 440.3,197.8 443.0,205.3 445.7,195.1 448.4,204.0 453.2,209.4 458.6,202.6 465.4,233.2 468.8,215.5 472.2,228.4 474.9,216.9 480.3,221.0 488.5,231.1 490.5,227.7 495.3,235.2 498.0,230.4" fill="none" stroke="#f48e42" stroke-width="1" stroke-linejoin="miter" shape-rendering="crispEdges"/>
</svg>

<!-- right column -->
<div class="a" style="left:587px;top:151px;width:86px;height:28px;background:#e1e1e1;border:2px solid #1d76cc"></div>
<div class="t" style="left:618px;top:159px">开始</div>
<div class="sep" style="top:192px"></div>
<div class="a" style="left:583px;top:204px;width:13px;height:13px;border-radius:50%;border:1px solid #333;background:#fff"></div>
<div class="t" style="left:599px;top:204px">读取</div>
<div class="a" style="left:583px;top:224px;width:13px;height:13px;border-radius:50%;border:1px solid #333;background:#fff"></div>
<div class="a" style="left:586px;top:227px;width:7px;height:7px;border-radius:50%;background:#333"></div>
<div class="t" style="left:599px;top:225px">写入</div>
<div class="sep" style="top:243px"></div>
<div class="cb" style="top:256px"></div>
<div class="t" style="left:599px;top:256px">快捷行程</div>
<div class="a" style="left:583px;top:279px;width:72px;height:26px;border:1px solid #d0d0d0;background:#fff"></div>
<div class="a" style="left:637px;top:280px;width:17px;height:24px;background:#fff"></div><div class="a" style="left:638px;top:281px;width:15px;height:11px;background:#ececec;border:1px solid #dadada"></div><div class="a" style="left:638px;top:292px;width:15px;height:11px;background:#ececec;border:1px solid #dadada"></div>
<svg class="a" style="left:641px;top:284px" width="9" height="16"><path d="M1 4 L4.5 0.5 L8 4 Z M1 10 L4.5 13.5 L8 10 Z" fill="#606060"/></svg>
<div class="t" style="left:587px;top:285px;color:#8a8a8a;font-size:12px">40</div>
<div class="t" style="left:669px;top:287px;font-size:12px">gB</div>
<div class="cb" style="top:320px"></div>
<svg class="a" style="left:585px;top:323px" width="10" height="8"><path d="M0.5 4 L3.5 7 L9.5 0.5" stroke="#222" stroke-width="1.2" fill="none"/></svg>
<div class="t" style="left:599px;top:321px">传输速率</div>
<div class="sep" style="top:337px"></div>
<div class="t" style="left:583px;top:344px">最低</div>
<div class="box" style="top:360px;color:#22a8f0">112.8 MB/s</div>
<div class="t" style="left:583px;top:387px">最高</div>
<div class="box" style="top:403px;color:#22a8f0">211.9 MB/s</div>
<div class="t" style="left:583px;top:427px">平均</div>
<div class="box" style="top:443px;color:#22a8f0">181.1 MB/s</div>
<div class="sep" style="top:473px"></div>
<div class="cb" style="top:483px"></div>
<svg class="a" style="left:585px;top:486px" width="10" height="8"><path d="M0.5 4 L3.5 7 L9.5 0.5" stroke="#222" stroke-width="1.2" fill="none"/></svg>
<div class="t" style="left:599px;top:484px">存取时间</div>
<div class="box" style="top:500px;color:#f8f830">6.55 ms</div>
<div class="cb" style="top:528px"></div>
<svg class="a" style="left:585px;top:531px" width="10" height="8"><path d="M0.5 4 L3.5 7 L9.5 0.5" stroke="#222" stroke-width="1.2" fill="none"/></svg>
<div class="t" style="left:599px;top:529px">突发传输速率</div>
<div class="box" style="top:545px;color:#fff">117.2 MB/s</div>
<div class="a" style="left:583px;top:570px;width:110px;height:5px;overflow:hidden"><div class="t" style="left:0;top:-1px">CPU 占用率</div></div>
</body></html>
